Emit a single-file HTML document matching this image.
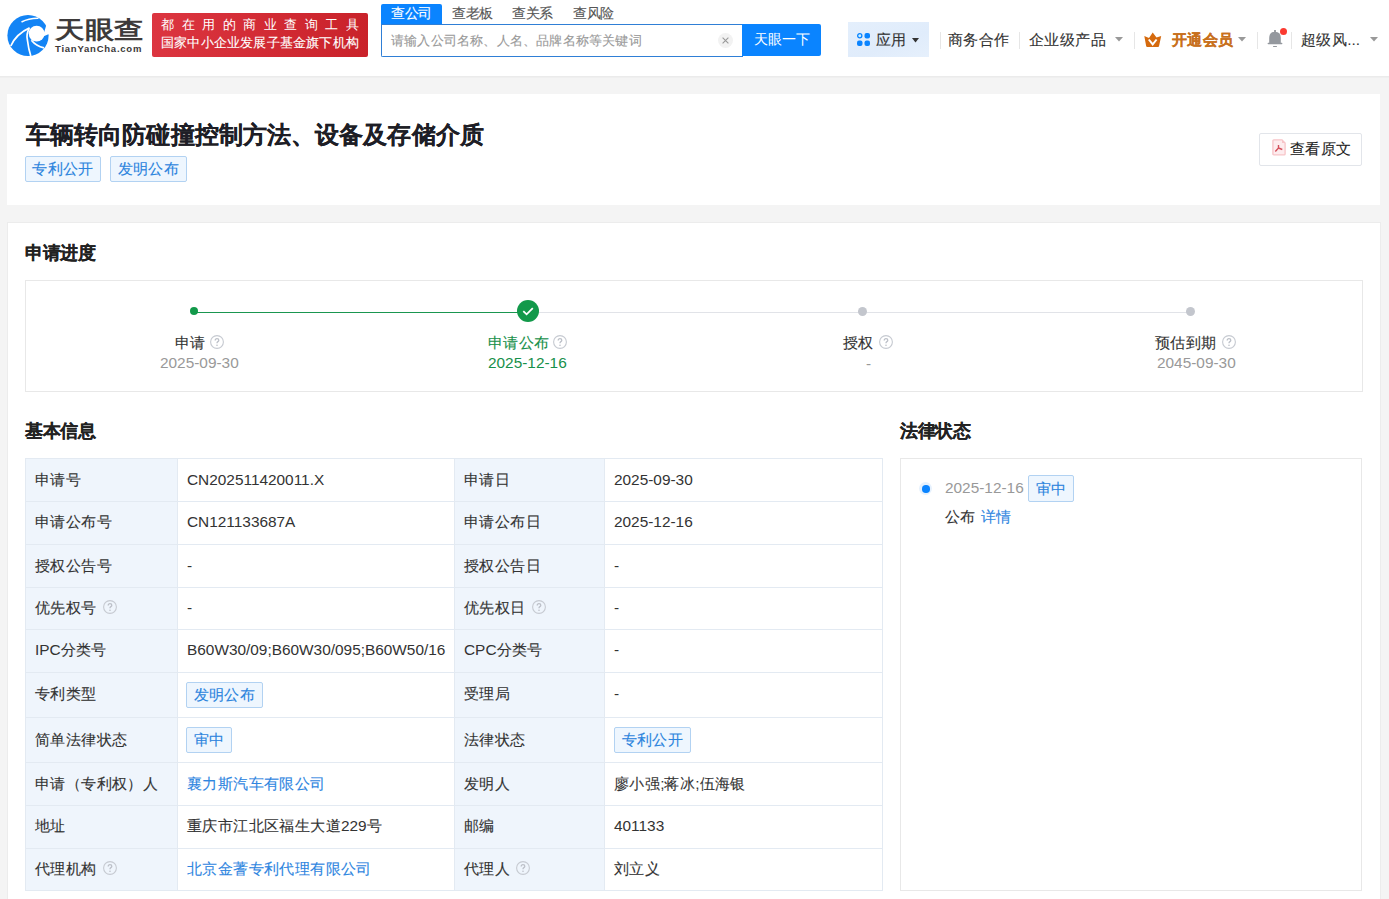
<!DOCTYPE html>
<html><head><meta charset="utf-8"><style>
*{margin:0;padding:0;box-sizing:border-box}
html,body{width:1389px;height:899px;overflow:hidden;background:#f4f4f4;font-family:"Liberation Sans",sans-serif;color:#333}
.a{position:absolute;white-space:nowrap}
#hdr{position:absolute;left:0;top:0;width:1389px;height:77px;background:#fff;border-bottom:1px solid #ebebeb;box-shadow:0 1px 1px rgba(0,0,0,.02)}
.sep{position:absolute;width:1px;height:17px;top:32px;background:#e6e6e6}
.card{position:absolute;background:#fff}
.tag{position:absolute;height:26px;border:1px solid #b2d2f2;background:#eef6fe;color:#2c84dd;font-size:15.4px;line-height:23px;text-align:center;border-radius:2px;white-space:nowrap}
.c{-webkit-text-stroke:0.12px currentColor}
.h2{position:absolute;font-size:17.6px;font-weight:bold;color:#222;line-height:20px;white-space:nowrap}
</style></head><body>
<div id="hdr">
<svg class="a" style="left:5px;top:12px" width="46" height="46" viewBox="0 0 46 46">
<circle cx="23" cy="23.5" r="20.6" fill="#1384f5"/>
<circle cx="31.6" cy="21.6" r="7.9" fill="#fff"/>
<path d="M39.4 19.6 L41.3 13 L46 13 L46 22.3 L43.4 22.3 L37 25 Z" fill="#fff"/>
<path d="M16.5 10 Q24 6 33.5 6.2" fill="none" stroke="#fff" stroke-width="1.5"/>
<path d="M5.8 34 Q11 22 24.6 15.9" fill="none" stroke="#fff" stroke-width="1.7"/>
<path d="M24.3 16.4 Q21 22 22.4 28 Q23.5 37 25.8 44" fill="none" stroke="#fff" stroke-width="1.7"/>
<path d="M26.4 28.2 Q31 34 39 35.8" fill="none" stroke="#fff" stroke-width="1.7"/>
</svg>
<div class="a" style="left:55px;top:15.5px;font-size:29px;line-height:34px;color:#3d3a3a;font-weight:bold;transform:scale(1.02,0.83);transform-origin:0 0">天眼查</div>
<div class="a" style="left:55px;top:43px;font-size:9.5px;line-height:11px;font-weight:bold;color:#3b3838;letter-spacing:0.77px">TianYanCha.com</div>
<div class="a" style="left:152px;top:13px;width:216px;height:44px;border-radius:2px;background:linear-gradient(90deg,#dc3540,#c9222a)"></div>
<div class="a" style="left:161px;top:17px;font-size:13.2px;line-height:16px;color:#fff;letter-spacing:7.55px;font-weight:500">都在用的商业查询工具</div>
<div class="a" style="left:161px;top:35px;font-size:13.2px;line-height:16px;color:#fff;font-weight:500"><span class="c" style="letter-spacing:0.2px">国家中小企业发展子基金旗下机构</span></div>
<div class="a" style="left:381px;top:4px;width:61px;height:21px;background:#0a84ff;border-radius:2px 2px 0 0"></div>
<div class="a" style="left:391px;top:4px;font-size:13.6px;line-height:19px;color:#fff;"><span class="c" style="letter-spacing:-0.4px">查公司</span></div>
<div class="a" style="left:452px;top:4px;font-size:13.6px;line-height:19px;color:#555;"><span class="c" style="letter-spacing:-0.4px">查老板</span></div>
<div class="a" style="left:512px;top:4px;font-size:13.6px;line-height:19px;color:#555;"><span class="c" style="letter-spacing:-0.4px">查关系</span></div>
<div class="a" style="left:573px;top:4px;font-size:13.6px;line-height:19px;color:#555;"><span class="c" style="letter-spacing:-0.4px">查风险</span></div>
<div class="a" style="left:381px;top:24px;width:362px;height:33px;border:1px solid #2f7fd6;border-right:none;border-radius:0 0 0 2px;background:#fff"></div>
<div class="a" style="left:391px;top:31px;font-size:13.2px;line-height:19px;color:#999;"><span class="c" style="letter-spacing:0.2px">请输入公司名称、人名、品牌名称等关键词</span></div>
<svg class="a" style="left:718px;top:33px" width="15" height="15" viewBox="0 0 15 15"><circle cx="7.5" cy="7.5" r="7.5" fill="#f2f2f2"/><path d="M4.6 4.6L10.4 10.4M10.4 4.6L4.6 10.4" stroke="#999" stroke-width="1.1"/></svg>
<div class="a" style="left:742px;top:24px;width:79px;height:32px;background:#0a84ff;border-radius:0 2px 2px 0;color:#fff;font-size:14px;line-height:30px;text-align:center">天眼一下</div>
<div class="a" style="left:848px;top:22px;width:81px;height:35px;background:linear-gradient(160deg,#e4effc,#e0ecfb 60%,#e6f0fc)"></div>
<svg class="a" style="left:857px;top:33px" width="13" height="13" viewBox="0 0 13 13"><circle cx="2.75" cy="2.75" r="2.1" fill="#cdf0ff" stroke="#0a84ff" stroke-width="1.3"/><rect x="7.5" y="0" width="5.5" height="5.5" rx="2" fill="#0a84ff"/><rect x="0" y="7.5" width="5.5" height="5.5" rx="2" fill="#0a84ff"/><rect x="7.5" y="7.5" width="5.5" height="5.5" rx="2" fill="#0a84ff"/></svg>
<div class="a" style="left:876px;top:30px;font-size:15.4px;line-height:20px;color:#333;"><span class="c" style="letter-spacing:0.4px">应用</span></div>
<svg class="a" style="left:912px;top:38px" width="7" height="5"><path d="M0 0H7L3.5 4.5Z" fill="#333"/></svg>
<div class="sep" style="left:940px"></div>
<div class="a" style="left:948px;top:30px;font-size:15.4px;line-height:20px;color:#333;"><span class="c" style="letter-spacing:0.4px">商务合作</span></div>
<div class="sep" style="left:1019px"></div>
<div class="a" style="left:1029px;top:30px;font-size:15.4px;line-height:20px;color:#333;"><span class="c" style="letter-spacing:0.4px">企业级产品</span></div>
<svg class="a" style="left:1115px;top:37px" width="8" height="5"><path d="M0 0H8L4.0 4.5Z" fill="#999"/></svg>
<div class="sep" style="left:1134px"></div>
<svg class="a" style="left:1144px;top:32px" width="18" height="16" viewBox="0 0 18 16"><path d="M0.3 4L5 5.9L8.7 0.5L12.5 5.6L17.2 4.1L15 14.2Q14.8 14.9 14 14.9H3.2Q2.4 14.9 2.2 14.2Z" fill="#d56a0e"/><path d="M4.8 7.5L8.7 12.4L12.6 7.5" stroke="#fff" stroke-width="2" fill="none"/></svg>
<div class="a" style="left:1172px;top:30px;font-size:15.4px;line-height:20px;color:#c8701c;font-weight:bold"><span class="c" style="letter-spacing:0.4px">开通会员</span></div>
<svg class="a" style="left:1238px;top:37px" width="8" height="5"><path d="M0 0H8L4.0 4.5Z" fill="#999"/></svg>
<div class="sep" style="left:1257px"></div>
<svg class="a" style="left:1266px;top:29px" width="18" height="19" viewBox="0 0 18 19"><rect x="8.1" y="1" width="1.8" height="2.5" fill="#94989e"/><path d="M3.2 14.2V9Q3.2 2.8 9 2.8Q14.8 2.8 14.8 9V14.2Z" fill="#94989e"/><rect x="1.6" y="13.7" width="14.8" height="1.5" rx="0.7" fill="#94989e"/><rect x="7" y="16.9" width="4" height="1.1" rx="0.5" fill="#94989e"/></svg>
<div class="a" style="left:1280px;top:27.8px;width:7px;height:7px;border-radius:50%;background:#fb3a30"></div>
<div class="sep" style="left:1291px"></div>
<div class="a" style="left:1301px;top:30px;font-size:15.4px;line-height:20px;color:#333;"><span class="c" style="letter-spacing:0.4px">超级风</span>...</div>
<svg class="a" style="left:1370px;top:37px" width="8" height="5"><path d="M0 0H8L4.0 4.5Z" fill="#999"/></svg>
</div>
<div class="card" style="left:7px;top:94px;width:1373px;height:111px"></div>
<div class="a" style="left:26px;top:120px;font-size:24.1px;line-height:30px;color:#1e1e26;font-weight:bold"><span class="c" style="letter-spacing:0.1px">车辆转向防碰撞控制方法、设备及存储介质</span></div>
<div class="tag" style="left:25px;top:156px;width:76px"><span class="c" style="letter-spacing:0.4px">专利公开</span></div>
<div class="tag" style="left:110px;top:156px;width:77px"><span class="c" style="letter-spacing:0.4px">发明公布</span></div>
<div class="a" style="left:1259px;top:133px;width:103px;height:33px;border:1px solid #e2e5ea;border-radius:2px;background:#fff"></div>
<svg class="a" style="left:1272px;top:139px" width="14" height="17" viewBox="0 0 14 17"><path d="M1.8 0.9H10L13.1 4.1V14.9Q13.1 15.8 12.2 15.8H1.8Q0.9 15.8 0.9 14.9V1.8Q0.9 0.9 1.8 0.9Z" fill="#fdecee" stroke="#f7c4c8" stroke-width="1.3"/><path d="M10 0.9V4.1H13.1" fill="#f7c4c8"/><path d="M6.5 6V9M6.5 9L3.3 12.5M6.5 9L10.3 10.5" stroke="#d4505c" stroke-width="1.4" fill="none"/></svg>
<div class="a" style="left:1290px;top:139px;font-size:15.4px;line-height:20px;color:#222;"><span class="c" style="letter-spacing:0.4px">查看原文</span></div>
<div class="card" style="left:7px;top:222px;width:1374px;height:700px;border:1px solid #ececec"></div>
<div class="h2" style="left:25px;top:243px"><span class="c" style="letter-spacing:-0.4px">申请进度</span></div>
<div class="a" style="left:25px;top:280px;width:1338px;height:112px;border:1px solid #e8e8e8"></div>
<div class="a" style="left:194px;top:312px;width:334px;height:1px;background:#1a9650"></div>
<div class="a" style="left:528px;top:312px;width:663px;height:1px;background:#e1e3e8"></div>
<div class="a" style="left:190px;top:307px;width:8px;height:8px;border-radius:50%;background:#12994a"></div>
<svg class="a" style="left:517px;top:300px" width="22" height="22" viewBox="0 0 22 22"><circle cx="11" cy="11" r="11" fill="#12994a"/><path d="M6.3 11.2L9.6 14.3L15.8 8.2" fill="none" stroke="#fff" stroke-width="1.8"/></svg>
<div class="a" style="left:858px;top:307px;width:9px;height:9px;border-radius:50%;background:#c3c6cd"></div>
<div class="a" style="left:1186px;top:307px;width:9px;height:9px;border-radius:50%;background:#c3c6cd"></div>
<div class="a" style="left:175px;top:333px;font-size:15.4px;line-height:20px;color:#333;"><span class="c" style="letter-spacing:0.4px">申请</span></div>
<svg class="a" style="left:210px;top:335px" width="14" height="14" viewBox="0 0 14 14"><circle cx="7" cy="7" r="6.4" fill="none" stroke="#c6cad1" stroke-width="1.1"/><path d="M5.2 5.5Q5.2 3.7 7 3.7Q8.8 3.7 8.8 5.2Q8.8 6.2 7.6 6.9Q7 7.3 7 8.3" fill="none" stroke="#bcc0c8" stroke-width="1.3"/><circle cx="7" cy="10.3" r="0.8" fill="#bcc0c8"/></svg>
<div class="a" style="left:160px;top:353px;font-size:15.4px;line-height:20px;color:#999;">2025-09-30</div>
<div class="a" style="left:488px;top:333px;font-size:15.4px;line-height:20px;color:#17904a;"><span class="c" style="letter-spacing:0.4px">申请公布</span></div>
<svg class="a" style="left:553px;top:335px" width="14" height="14" viewBox="0 0 14 14"><circle cx="7" cy="7" r="6.4" fill="none" stroke="#c6cad1" stroke-width="1.1"/><path d="M5.2 5.5Q5.2 3.7 7 3.7Q8.8 3.7 8.8 5.2Q8.8 6.2 7.6 6.9Q7 7.3 7 8.3" fill="none" stroke="#bcc0c8" stroke-width="1.3"/><circle cx="7" cy="10.3" r="0.8" fill="#bcc0c8"/></svg>
<div class="a" style="left:488px;top:353px;font-size:15.4px;line-height:20px;color:#17904a;">2025-12-16</div>
<div class="a" style="left:843px;top:333px;font-size:15.4px;line-height:20px;color:#333;"><span class="c" style="letter-spacing:0.4px">授权</span></div>
<svg class="a" style="left:879px;top:335px" width="14" height="14" viewBox="0 0 14 14"><circle cx="7" cy="7" r="6.4" fill="none" stroke="#c6cad1" stroke-width="1.1"/><path d="M5.2 5.5Q5.2 3.7 7 3.7Q8.8 3.7 8.8 5.2Q8.8 6.2 7.6 6.9Q7 7.3 7 8.3" fill="none" stroke="#bcc0c8" stroke-width="1.3"/><circle cx="7" cy="10.3" r="0.8" fill="#bcc0c8"/></svg>
<div class="a" style="left:866px;top:354px;font-size:15.4px;line-height:20px;color:#999;">-</div>
<div class="a" style="left:1155px;top:333px;font-size:15.4px;line-height:20px;color:#333;"><span class="c" style="letter-spacing:0.4px">预估到期</span></div>
<svg class="a" style="left:1222px;top:335px" width="14" height="14" viewBox="0 0 14 14"><circle cx="7" cy="7" r="6.4" fill="none" stroke="#c6cad1" stroke-width="1.1"/><path d="M5.2 5.5Q5.2 3.7 7 3.7Q8.8 3.7 8.8 5.2Q8.8 6.2 7.6 6.9Q7 7.3 7 8.3" fill="none" stroke="#bcc0c8" stroke-width="1.3"/><circle cx="7" cy="10.3" r="0.8" fill="#bcc0c8"/></svg>
<div class="a" style="left:1157px;top:353px;font-size:15.4px;line-height:20px;color:#999;">2045-09-30</div>
<div class="h2" style="left:25px;top:421px"><span class="c" style="letter-spacing:-0.4px">基本信息</span></div>
<div class="h2" style="left:900px;top:421px"><span class="c" style="letter-spacing:-0.4px">法律状态</span></div>
<div class="a" style="left:900px;top:458px;width:462px;height:433px;border:1px solid #e8e8e8"></div>
<div class="a" style="left:25px;top:458px;width:152px;height:432px;background:#eff5fc"></div>
<div class="a" style="left:454px;top:458px;width:150px;height:432px;background:#eff5fc"></div>
<div class="a" style="left:25px;top:458px;width:858px;height:1px;background:#e3eaf2"></div>
<div class="a" style="left:25px;top:501px;width:858px;height:1px;background:#e3eaf2"></div>
<div class="a" style="left:25px;top:544px;width:858px;height:1px;background:#e3eaf2"></div>
<div class="a" style="left:25px;top:587px;width:858px;height:1px;background:#e3eaf2"></div>
<div class="a" style="left:25px;top:629px;width:858px;height:1px;background:#e3eaf2"></div>
<div class="a" style="left:25px;top:672px;width:858px;height:1px;background:#e3eaf2"></div>
<div class="a" style="left:25px;top:717px;width:858px;height:1px;background:#e3eaf2"></div>
<div class="a" style="left:25px;top:762px;width:858px;height:1px;background:#e3eaf2"></div>
<div class="a" style="left:25px;top:805px;width:858px;height:1px;background:#e3eaf2"></div>
<div class="a" style="left:25px;top:848px;width:858px;height:1px;background:#e3eaf2"></div>
<div class="a" style="left:25px;top:890px;width:858px;height:1px;background:#e3eaf2"></div>
<div class="a" style="left:25px;top:458px;width:1px;height:433px;background:#e3eaf2"></div>
<div class="a" style="left:177px;top:458px;width:1px;height:433px;background:#e3eaf2"></div>
<div class="a" style="left:454px;top:458px;width:1px;height:433px;background:#e3eaf2"></div>
<div class="a" style="left:604px;top:458px;width:1px;height:433px;background:#e3eaf2"></div>
<div class="a" style="left:882px;top:458px;width:1px;height:433px;background:#e3eaf2"></div>
<div class="a" style="left:35px;top:470px;font-size:15.4px;line-height:20px;color:#333"><span class="c" style="letter-spacing:0.4px">申请号</span></div>
<div class="a" style="left:187px;top:470px;font-size:15.4px;line-height:20px;color:#333">CN202511420011.X</div>
<div class="a" style="left:464px;top:470px;font-size:15.4px;line-height:20px;color:#333"><span class="c" style="letter-spacing:0.4px">申请日</span></div>
<div class="a" style="left:614px;top:470px;font-size:15.4px;line-height:20px;color:#333">2025-09-30</div>
<div class="a" style="left:35px;top:512px;font-size:15.4px;line-height:20px;color:#333"><span class="c" style="letter-spacing:0.4px">申请公布号</span></div>
<div class="a" style="left:187px;top:512px;font-size:15.4px;line-height:20px;color:#333">CN121133687A</div>
<div class="a" style="left:464px;top:512px;font-size:15.4px;line-height:20px;color:#333"><span class="c" style="letter-spacing:0.4px">申请公布日</span></div>
<div class="a" style="left:614px;top:512px;font-size:15.4px;line-height:20px;color:#333">2025-12-16</div>
<div class="a" style="left:35px;top:556px;font-size:15.4px;line-height:20px;color:#333"><span class="c" style="letter-spacing:0.4px">授权公告号</span></div>
<div class="a" style="left:187px;top:556px;font-size:15.4px;line-height:20px;color:#333">-</div>
<div class="a" style="left:464px;top:556px;font-size:15.4px;line-height:20px;color:#333"><span class="c" style="letter-spacing:0.4px">授权公告日</span></div>
<div class="a" style="left:614px;top:556px;font-size:15.4px;line-height:20px;color:#333">-</div>
<div class="a" style="left:35px;top:598px;font-size:15.4px;line-height:20px;color:#333"><span class="c" style="letter-spacing:0.4px">优先权号</span><svg style="margin-left:6px;vertical-align:-1px" width="14" height="14" viewBox="0 0 14 14"><circle cx="7" cy="7" r="6.4" fill="none" stroke="#c6cad1" stroke-width="1.1"/><path d="M5.2 5.5Q5.2 3.7 7 3.7Q8.8 3.7 8.8 5.2Q8.8 6.2 7.6 6.9Q7 7.3 7 8.3" fill="none" stroke="#bcc0c8" stroke-width="1.3"/><circle cx="7" cy="10.3" r="0.8" fill="#bcc0c8"/></svg></div>
<div class="a" style="left:187px;top:598px;font-size:15.4px;line-height:20px;color:#333">-</div>
<div class="a" style="left:464px;top:598px;font-size:15.4px;line-height:20px;color:#333"><span class="c" style="letter-spacing:0.4px">优先权日</span><svg style="margin-left:6px;vertical-align:-1px" width="14" height="14" viewBox="0 0 14 14"><circle cx="7" cy="7" r="6.4" fill="none" stroke="#c6cad1" stroke-width="1.1"/><path d="M5.2 5.5Q5.2 3.7 7 3.7Q8.8 3.7 8.8 5.2Q8.8 6.2 7.6 6.9Q7 7.3 7 8.3" fill="none" stroke="#bcc0c8" stroke-width="1.3"/><circle cx="7" cy="10.3" r="0.8" fill="#bcc0c8"/></svg></div>
<div class="a" style="left:614px;top:598px;font-size:15.4px;line-height:20px;color:#333">-</div>
<div class="a" style="left:35px;top:640px;font-size:15.4px;line-height:20px;color:#333">IPC<span class="c" style="letter-spacing:0.4px">分类号</span></div>
<div class="a" style="left:187px;top:640px;font-size:15.4px;line-height:20px;color:#333">B60W30/09;B60W30/095;B60W50/16</div>
<div class="a" style="left:464px;top:640px;font-size:15.4px;line-height:20px;color:#333">CPC<span class="c" style="letter-spacing:0.4px">分类号</span></div>
<div class="a" style="left:614px;top:640px;font-size:15.4px;line-height:20px;color:#333">-</div>
<div class="a" style="left:35px;top:684px;font-size:15.4px;line-height:20px;color:#333"><span class="c" style="letter-spacing:0.4px">专利类型</span></div>
<div class="tag" style="left:186px;top:682px;width:77px"><span class="c" style="letter-spacing:0.4px">发明公布</span></div>
<div class="a" style="left:464px;top:684px;font-size:15.4px;line-height:20px;color:#333"><span class="c" style="letter-spacing:0.4px">受理局</span></div>
<div class="a" style="left:614px;top:684px;font-size:15.4px;line-height:20px;color:#333">-</div>
<div class="a" style="left:35px;top:730px;font-size:15.4px;line-height:20px;color:#333"><span class="c" style="letter-spacing:0.4px">简单法律状态</span></div>
<div class="tag" style="left:186px;top:727px;width:46px"><span class="c" style="letter-spacing:0.4px">审中</span></div>
<div class="a" style="left:464px;top:730px;font-size:15.4px;line-height:20px;color:#333"><span class="c" style="letter-spacing:0.4px">法律状态</span></div>
<div class="tag" style="left:614px;top:727px;width:77px"><span class="c" style="letter-spacing:0.4px">专利公开</span></div>
<div class="a" style="left:35px;top:774px;font-size:15.4px;line-height:20px;color:#333"><span class="c" style="letter-spacing:0.4px">申请（专利权）人</span></div>
<div class="a" style="left:187px;top:774px;font-size:15.4px;line-height:20px;color:#2f86df;"><span class="c" style="letter-spacing:0.4px">襄力斯汽车有限公司</span></div>
<div class="a" style="left:464px;top:774px;font-size:15.4px;line-height:20px;color:#333"><span class="c" style="letter-spacing:0.4px">发明人</span></div>
<div class="a" style="left:614px;top:774px;font-size:15.4px;line-height:20px;color:#333"><span class="c" style="letter-spacing:0.4px">廖小强</span>;<span class="c" style="letter-spacing:0.4px">蒋冰</span>;<span class="c" style="letter-spacing:0.4px">伍海银</span></div>
<div class="a" style="left:35px;top:816px;font-size:15.4px;line-height:20px;color:#333"><span class="c" style="letter-spacing:0.4px">地址</span></div>
<div class="a" style="left:187px;top:816px;font-size:15.4px;line-height:20px;color:#333"><span class="c" style="letter-spacing:0.4px">重庆市江北区福生大道</span>229<span class="c" style="letter-spacing:0.4px">号</span></div>
<div class="a" style="left:464px;top:816px;font-size:15.4px;line-height:20px;color:#333"><span class="c" style="letter-spacing:0.4px">邮编</span></div>
<div class="a" style="left:614px;top:816px;font-size:15.4px;line-height:20px;color:#333">401133</div>
<div class="a" style="left:35px;top:859px;font-size:15.4px;line-height:20px;color:#333"><span class="c" style="letter-spacing:0.4px">代理机构</span><svg style="margin-left:6px;vertical-align:-1px" width="14" height="14" viewBox="0 0 14 14"><circle cx="7" cy="7" r="6.4" fill="none" stroke="#c6cad1" stroke-width="1.1"/><path d="M5.2 5.5Q5.2 3.7 7 3.7Q8.8 3.7 8.8 5.2Q8.8 6.2 7.6 6.9Q7 7.3 7 8.3" fill="none" stroke="#bcc0c8" stroke-width="1.3"/><circle cx="7" cy="10.3" r="0.8" fill="#bcc0c8"/></svg></div>
<div class="a" style="left:187px;top:859px;font-size:15.4px;line-height:20px;color:#2f86df;"><span class="c" style="letter-spacing:0.4px">北京金蓍专利代理有限公司</span></div>
<div class="a" style="left:464px;top:859px;font-size:15.4px;line-height:20px;color:#333"><span class="c" style="letter-spacing:0.4px">代理人</span><svg style="margin-left:6px;vertical-align:-1px" width="14" height="14" viewBox="0 0 14 14"><circle cx="7" cy="7" r="6.4" fill="none" stroke="#c6cad1" stroke-width="1.1"/><path d="M5.2 5.5Q5.2 3.7 7 3.7Q8.8 3.7 8.8 5.2Q8.8 6.2 7.6 6.9Q7 7.3 7 8.3" fill="none" stroke="#bcc0c8" stroke-width="1.3"/><circle cx="7" cy="10.3" r="0.8" fill="#bcc0c8"/></svg></div>
<div class="a" style="left:614px;top:859px;font-size:15.4px;line-height:20px;color:#333"><span class="c" style="letter-spacing:0.4px">刘立义</span></div>
<div class="a" style="left:919px;top:482px;width:13px;height:13px;border-radius:50%;background:#e6f1fd"></div>
<div class="a" style="left:922px;top:485px;width:7.5px;height:7.5px;border-radius:50%;background:#0a84ff"></div>
<div class="a" style="left:945px;top:478px;font-size:15.4px;line-height:20px;color:#999;">2025-12-16</div>
<div class="tag" style="left:1028px;top:475px;width:46px;height:27px;line-height:25px"><span class="c" style="letter-spacing:0.4px">审中</span></div>
<div class="a" style="left:945px;top:507px;font-size:15.4px;line-height:20px;color:#333"><span class="c" style="letter-spacing:0.4px">公布</span> <span style="color:#2f86df;margin-left:1px"><span class="c" style="letter-spacing:0.4px">详情</span></span></div>
</body></html>
